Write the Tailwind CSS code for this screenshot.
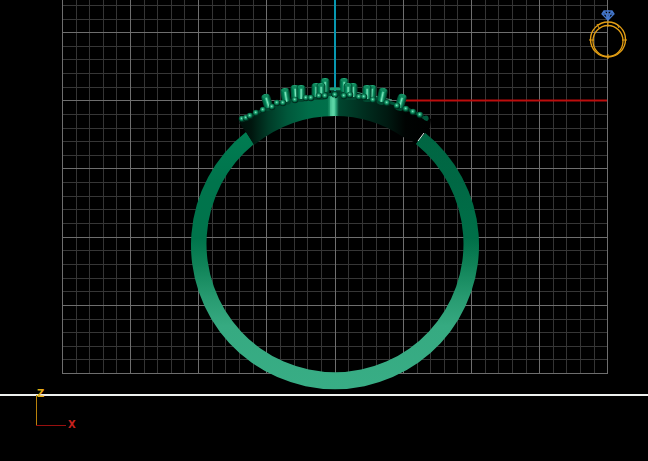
<!DOCTYPE html>
<html lang="en">
<head>
<meta charset="utf-8">
<title>Ring model viewport</title>
<script src="https://cdn.jsdelivr.net/npm/@tailwindcss/browser@4"></script>
</head>
<body class="bg-black overflow-hidden">
<main class="w-full">
<svg class="block w-full h-auto" viewBox="0 0 648 461" role="img" aria-label="Front view of a ring model">
  <defs>
    <linearGradient id="band" gradientUnits="userSpaceOnUse" x1="0" y1="130" x2="0" y2="388">
      <stop offset="0" stop-color="#007d52"/><stop offset=".2" stop-color="#00744c"/><stop offset=".42" stop-color="#00744b"/><stop offset=".53" stop-color="#118459"/><stop offset=".66" stop-color="#299c72"/><stop offset=".76" stop-color="#36aa81"/><stop offset="1" stop-color="#38ad85"/>
    </linearGradient>
    <linearGradient id="shade" gradientUnits="userSpaceOnUse" x1="0" y1="130" x2="0" y2="270">
      <stop offset="0" stop-color="#004d32" stop-opacity=".5"/><stop offset=".4" stop-color="#004d32" stop-opacity=".3"/><stop offset="1" stop-color="#004d32" stop-opacity="0"/>
    </linearGradient>
    <linearGradient id="head" gradientUnits="userSpaceOnUse" x1="240" y1="0" x2="430" y2="0">
      <stop offset="0" stop-color="#000e09"/><stop offset=".06" stop-color="#00160e"/><stop offset=".15" stop-color="#003b27"/><stop offset=".25" stop-color="#00583b"/><stop offset=".36" stop-color="#006c48"/><stop offset=".46" stop-color="#00704a"/><stop offset=".475" stop-color="#239b70"/><stop offset=".49" stop-color="#72e9b9"/><stop offset=".505" stop-color="#2aa579"/><stop offset=".52" stop-color="#00462f"/><stop offset=".65" stop-color="#002e1f"/><stop offset=".78" stop-color="#001810"/><stop offset=".87" stop-color="#000302"/><stop offset="1" stop-color="#000"/>
    </linearGradient>
    <linearGradient id="metal">
      <stop offset="0" stop-color="#00593b"/><stop offset=".3" stop-color="#00885a"/><stop offset=".52" stop-color="#7ce8bd"/><stop offset=".72" stop-color="#0c8c5f"/><stop offset="1" stop-color="#00462e"/>
    </linearGradient>
    <radialGradient id="ball" cx=".45" cy=".4">
      <stop offset="0" stop-color="#8af0c8"/><stop offset=".35" stop-color="#27a678"/><stop offset=".75" stop-color="#00623f"/><stop offset="1" stop-color="#002c1d"/>
    </radialGradient>
    <g id="prong"><rect x="-4.500" y="-4" width="9" height="17" rx="3.500" fill="#004a31"/><rect x="-4" y="-4" width="8" height="14" rx="3.500" fill="url(#metal)"/><ellipse cy="-2" rx="3.300" ry="1.800" fill="#11895e"/></g>
    <circle id="bead" r="3.300" fill="url(#ball)"/>
  </defs>

  <g fill="none" shape-rendering="crispEdges">
    <path stroke="#343434" d="M76.500 0v373M89.500 0v373M103.500 0v373M116.500 0v373M144.500 0v373M157.500 0v373M171.500 0v373M184.500 0v373M212.500 0v373M225.500 0v373M239.500 0v373M253.500 0v373M280.500 0v373M294.500 0v373M307.500 0v373M321.500 0v373M348.500 0v373M362.500 0v373M376.500 0v373M389.500 0v373M417.500 0v373M430.500 0v373M444.500 0v373M457.500 0v373M485.500 0v373M498.500 0v373M512.500 0v373M526.500 0v373M553.500 0v373M566.500 0v373M580.500 0v373M594.500 0v373"/>
    <path stroke="#363636" d="M62 5.500h546M62 19.500h546M62 46.500h546M62 59.500h546M62 73.500h546M62 87.500h546M62 114.500h546M62 128.500h546M62 141.500h546M62 155.500h546M62 182.500h546M62 196.500h546M62 209.500h546M62 223.500h546M62 250.500h546M62 264.500h546M62 278.500h546M62 291.500h546M62 319.500h546M62 332.500h546M62 346.500h546M62 359.500h546"/>
    <path stroke="#6e6e6e" d="M62.500 0v374M130.500 0v374M198.500 0v374M266.500 0v374M335.500 0v374M403.500 0v374M471.500 0v374M539.500 0v374M607.500 0v374M62 32.500h546M62 100.500h546M62 168.500h546M62 237.500h546M62 305.500h546M62 373.500h546"/>
  </g>
  <path d="M335 0V92" stroke="#0797b0" stroke-width="2"/>
  <path d="M400 100.500H607" stroke="#bd0d0d" stroke-width="2"/>

  <path fill="url(#band)" d="M246 132A144 144 0 1 0 424 132L416 144A128.500 128.500 0 1 1 254 144Z"/>
  <path fill="url(#shade)" d="M479 244.500A144 144 0 0 0 424 132L416 144A128.500 128.500 0 0 1 463.500 244.500V270H479Z"/>

  <path fill="url(#head)" d="M239 123Q281 95 335 94Q389 95 431 119L430 128L416 143L403 137Q372 116 335 116Q290 116 254 145L246 132Z"/>
  <path d="M418 141L424 133" stroke="#e6f5ef" stroke-width="1"/>
  <path d="M242 121Q281 97 335 94Q389 95 428 120" stroke="#005539" stroke-width="3" fill="none"/>
  <path d="M355 92L392 100" stroke="#48a584"/>

  <g>
    <use href="#prong" transform="translate(325 82)"/>
    <use href="#prong" transform="translate(316 87)"/><use href="#prong" transform="translate(321 87)"/>
    <use href="#prong" transform="translate(295 89) rotate(-4)"/><use href="#prong" transform="translate(301 89)"/>
    <use href="#prong" transform="translate(285 92) rotate(-9)"/>
    <use href="#prong" transform="translate(266 98) rotate(-17)"/>
    <use href="#prong" transform="translate(344 82)"/>
    <use href="#prong" transform="translate(353 87)"/><use href="#prong" transform="translate(348 87)"/>
    <use href="#prong" transform="translate(372 89) rotate(4)"/><use href="#prong" transform="translate(367 89)"/>
    <use href="#prong" transform="translate(383 92) rotate(12)"/>
    <use href="#prong" transform="translate(402 98) rotate(17)"/>
  </g>
  <path d="M331 91V96H340V91Z" fill="#003d29"/>
  <path d="M331 89H339" stroke="#1da176" stroke-width="3" stroke-linecap="round"/>
  <g>
    <use href="#bead" x="242" y="119"/><use href="#bead" x="246" y="118"/><use href="#bead" x="250" y="116"/><use href="#bead" x="256" y="113"/><use href="#bead" x="263" y="110"/><use href="#bead" x="272" y="107"/><use href="#bead" x="277" y="103"/><use href="#bead" x="283" y="103"/><use href="#bead" x="295" y="100"/><use href="#bead" x="306" y="98"/><use href="#bead" x="311" y="98"/><use href="#bead" x="319" y="96"/><use href="#bead" x="325" y="96"/><use href="#bead" x="335" y="95"/>
    <use href="#bead" x="344" y="96"/><use href="#bead" x="350" y="95"/><use href="#bead" x="359" y="97"/><use href="#bead" x="364" y="97"/><use href="#bead" x="373" y="100"/><use href="#bead" x="387" y="103"/><use href="#bead" x="397" y="106"/><use href="#bead" x="406" y="109"/><use href="#bead" x="413" y="112"/><use href="#bead" x="420" y="115"/>
    <circle cx="426" cy="118" r="2.500" fill="#00583b"/>
  </g>
  <path d="M330 97H335V116H330Z" fill="#56cfa0" opacity=".65"/>

  <g fill="none" stroke="#e39e14">
    <circle cx="608" cy="39.500" r="17.500" stroke-width="1.400"/>
    <ellipse cx="608" cy="41" rx="15" ry="15.500" stroke-width="1.300"/>
    <path d="M608 20v7M589 40h5M622 40h5M608 54v5M597 24l2 4M617 24l2 4"/>
    <path stroke="#4376ca" stroke-width="1.300" d="M604 11H612L614 14L608 20L602 14ZM602 14H614M608 10V20M604 11L606 14L608 20L610 14L612 11"/>
  </g>

  <rect y="394" width="648" height="2" fill="#edf0ee"/>
  <path d="M36.500 395V425" stroke="#b9820b"/>
  <path d="M36 425.500H66" stroke="#98100f"/>
  <text x="37" y="397" class="font-['DejaVu_Sans',sans-serif] text-[10px] font-bold fill-[#e3ac18]">Z</text>
  <text x="68" y="428" class="font-['DejaVu_Sans',sans-serif] text-[10px] font-bold fill-[#c5221e]">X</text>
</svg>
</main>
</body>
</html>
